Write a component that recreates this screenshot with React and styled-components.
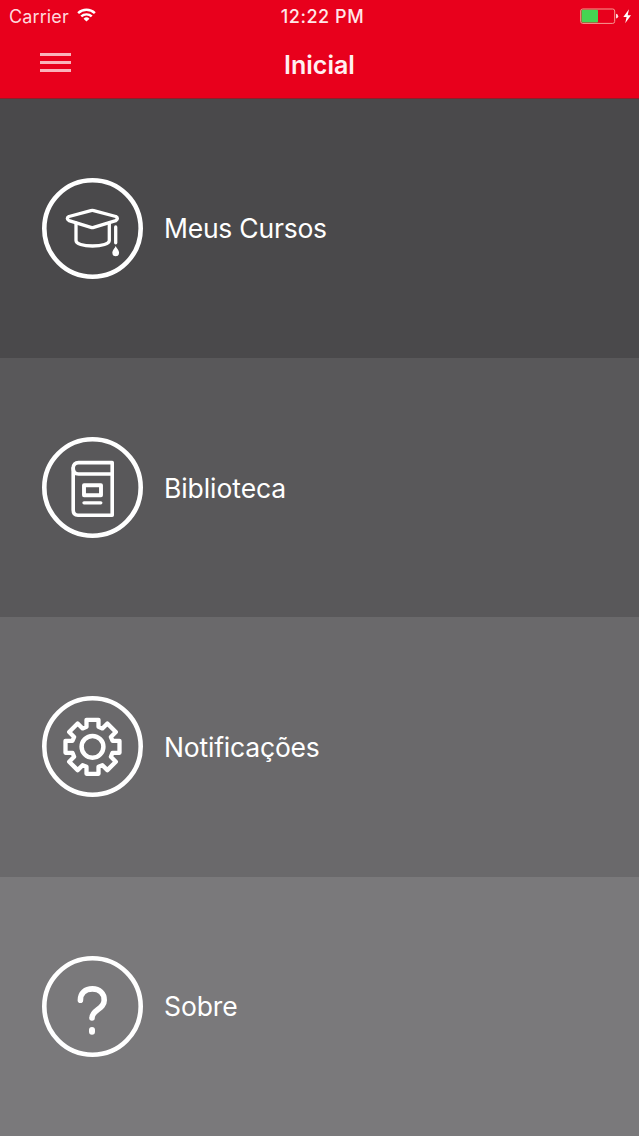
import React from 'react';
import styled, { createGlobalStyle } from 'styled-components';

const GlobalStyle = createGlobalStyle`
    body {
        margin: 0;
        background: #7a797b;
        font-family: Inter, "Liberation Sans", sans-serif;
    }
`

const toothPath = () => {
    const points = [];
    for (let i = 0; i < 8; i++) {
        const a = (i * Math.PI) / 4;
        [[-6, -20], [-6, -27], [6, -27], [6, -20]].forEach(([x, y]) => {
            const px = x * Math.cos(a) - y * Math.sin(a);
            const py = x * Math.sin(a) + y * Math.cos(a);
            points.push(`${(50.5 + px).toFixed(2)} ${(50.8 + py).toFixed(2)}`);
        });
    }
    return `M${points.join('L')}Z`;
};

const CapIcon = () => (
    <g strokeWidth="3.3">
        <path d="M48.9 32.6Q50.3 32.2 51.7 32.6L73.8 38.5Q77 40.5 73.8 42.7L51.7 49.4Q50.3 49.8 48.9 49.4L27 42.7Q23.6 40.5 27 38.5Z" />
        <path d="M34 45V62.5C34 65.8 41 68 50.5 68S67.3 65.8 67.3 62.5V45" />
        <path d="M73.7 49V64.8" />
        <path d="M73.7 68C72.8 70.3 70.3 72.3 70.3 74.8A3.4 3.4 0 0 0 77.1 74.8C77.1 72.3 74.6 70.3 73.7 68Z" fill="#fff" stroke="none" />
    </g>
);

const BookIcon = () => (
    <g strokeWidth="3.6">
        <path d="M70.2 25.6H36.5C33.2 25.6 31.2 27.8 31.2 31V73C31.2 76.3 33 78.2 36 78.2H70.2Z" />
        <path d="M31.2 31C31.2 34.8 33.2 37 36.5 37H70.2" />
        <path d="M42 48.2H59V58.2H42Z" strokeWidth="3.9" />
        <path d="M42 65.8H58.8" strokeWidth="3.3" />
    </g>
);

const GearIcon = () => (
    <g strokeWidth="4.3">
        <path d={toothPath()} />
        <circle cx="50.5" cy="50.8" r="10.9" strokeWidth="4.5" />
    </g>
);

const QuestionIcon = () => (
    <g strokeWidth="5.6">
        <path d="M38.4 44.2C38.4 37 43.3 32.9 50.4 32.9C57.5 32.9 62.2 37.3 62.2 44.2C62.2 53.5 50 53.5 50 62" />
        <path d="M50 74V75.8" strokeWidth="6" />
    </g>
);

const items = [
    { label: 'Meus Cursos', color: '#4a494b', spacing: -0.23, Icon: CapIcon },
    { label: 'Biblioteca', color: '#59585a', spacing: -0.07, Icon: BookIcon },
    { label: 'Notificações', color: '#6a696b', spacing: -0.19, Icon: GearIcon },
    { label: 'Sobre', color: '#7a797b', spacing: -0.1, Icon: QuestionIcon },
];

function App() {
    return (
        <Screen>
            <GlobalStyle />
            <Header>
                <StatusBar>
                    <Carrier>
                        <span>Carrier</span>
                        <svg width="19" height="14.5" viewBox="0 0 20 15" fill="none" stroke="#fff" strokeWidth="2.6">
                            <path d="M1.2 5.2A12.6 12.6 0 0 1 18.8 5.2" />
                            <path d="M4.5 8.8A7.9 7.9 0 0 1 15.5 8.8" />
                            <path d="M10 14.2L6.9 11.2A4.4 4.4 0 0 1 13.1 11.2Z" fill="#fff" stroke="none" />
                        </svg>
                    </Carrier>
                    <Clock>12:22 PM</Clock>
                    <Battery>
                        <svg width="52" height="17" viewBox="0 0 52 17">
                            <rect x="0.7" y="1" width="34" height="14.4" rx="2" fill="none" stroke="#f79a92" />
                            <rect x="1.5" y="1.8" width="16.5" height="12.8" rx="1" fill="#45d552" />
                            <path d="M36 5.8Q38.2 6.2 38.2 8.2T36 10.6Z" fill="#ffdadd" />
                            <path d="M49 1.2L43.3 9H46.6L45.2 15.3L51 7.2H47.7Z" fill="#fff" />
                        </svg>
                    </Battery>
                </StatusBar>
                <NavBar>
                    <MenuButton aria-label="Menu">
                        <Bar />
                        <Bar />
                        <Bar />
                    </MenuButton>
                    <Title>Inicial</Title>
                </NavBar>
            </Header>
            <Menu>
                {items.map(({ label, color, spacing, Icon }) => (
                    <MenuItem key={label} $color={color}>
                        <Badge viewBox="0 0 101 101">
                            <circle cx="50.5" cy="50.5" r="48.2" strokeWidth="4.6" />
                            <Icon />
                        </Badge>
                        <Label $spacing={spacing}>{label}</Label>
                    </MenuItem>
                ))}
            </Menu>
        </Screen>
    )
}

export default App;

const Screen = styled.div`
    display: flex;
    flex-direction: column;
    width: 639px;
    height: 1136px;
    overflow: hidden;
`

const Header = styled.header`
    flex: none;
    height: 98.5px;
    box-sizing: border-box;
    background: #e8001c;
    border-bottom: 1px solid #8c1f2b;
`

const StatusBar = styled.div`
    display: grid;
    grid-template-columns: 1fr auto 1fr;
    align-items: center;
    height: 32px;
    padding: 0 7px 0 9px;
`

const Carrier = styled.div`
    display: flex;
    align-items: center;
    gap: 8px;
    color: #ffd9dc;
    font-size: 18px;
    letter-spacing: 0.12px;

    svg {
        margin-top: -2px;
    }
`

const Clock = styled.div`
    padding-left: 4px;
    color: #ffe6e8;
    font-size: 18px;
    font-weight: 500;
    letter-spacing: 0.55px;
`

const Battery = styled.div`
    display: flex;
    justify-content: flex-end;
`

const NavBar = styled.div`
    display: grid;
    grid-template-columns: 1fr auto 1fr;
    align-items: center;
    height: 66px;
    padding: 0 40px;
`

const MenuButton = styled.button`
    display: flex;
    flex-direction: column;
    gap: 5px;
    width: 31px;
    padding: 0;
    margin-top: -5px;
    border: 0;
    background: none;
`

const Bar = styled.span`
    height: 3px;
    background: #fab3ba;
`

const Title = styled.h1`
    margin: 0;
    color: #fff0f1;
    font-size: 25px;
    font-weight: 600;
`

const Menu = styled.nav`
    flex: 1;
    display: grid;
    grid-template-rows: repeat(4, 1fr);
`

const MenuItem = styled.a`
    display: flex;
    align-items: center;
    gap: 21px;
    padding-left: 42px;
    background: ${props => props.$color};
`

const Badge = styled.svg`
    width: 101px;
    height: 101px;
    fill: none;
    stroke: #fff;
    stroke-linecap: round;
    stroke-linejoin: round;
`

const Label = styled.span`
    color: #fff;
    font-size: 26.5px;
    letter-spacing: ${props => props.$spacing}px;
`
